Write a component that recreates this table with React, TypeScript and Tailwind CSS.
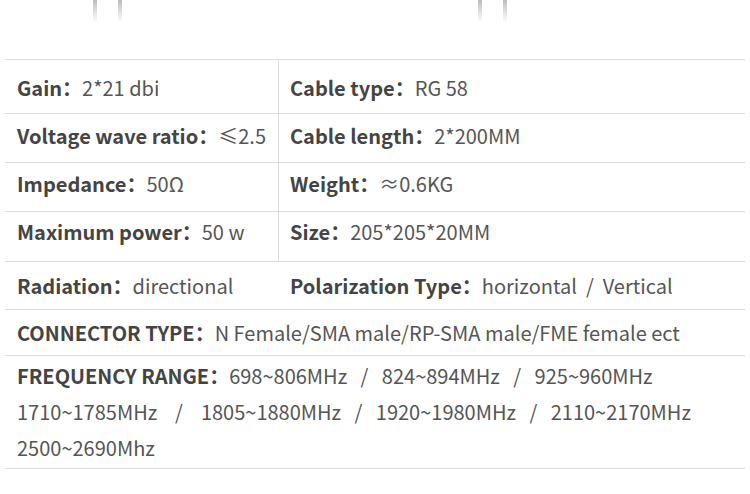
const font = { fontFamily: '"Noto Sans CJK SC", "Noto Sans", sans-serif' };

function Spec({ label, value }: { label: string; value: React.ReactNode }) {
  return (
    <span className="whitespace-nowrap">
      <b className="font-bold text-[#444]">{label}：</b>
      <span className="text-[#555]">{value}</span>
    </span>
  );
}

function Antenna() {
  return (
    <div className="flex gap-[21px]">
      <div className="w-[4px] h-[22px] bg-gradient-to-b from-[#bdbdbd] to-white" />
      <div className="w-[4px] h-[22px] bg-gradient-to-b from-[#bdbdbd] to-white" />
    </div>
  );
}

export default function App() {
  const pairs: [string, string, string, string, string][] = [
    ['Voltage wave ratio', '≤2.5', 'Cable length', '2*200MM', 'h-[48px] pt-[8px]'],
    ['Impedance', '50Ω', 'Weight', '≈0.6KG', 'h-[48px] pt-[7px]'],
    ['Maximum power', '50 w', 'Size', '205*205*20MM', 'h-[49px] pt-[6px]'],
  ];

  return (
    <div className="w-[750px] h-[494px] bg-white text-[20px] overflow-hidden" style={font}>
      <div className="h-[59px] flex">
        <div className="ml-[93px]">
          <Antenna />
        </div>
        <div className="ml-[356px]">
          <Antenna />
        </div>
      </div>

      <div className="mx-[5px] border-t border-[#dcdcdc]">
        <div className="grid grid-cols-[274px_1fr] border-b border-[#dcdcdc]">
          <div className="border-r border-[#dcdcdc] h-[53px] pl-[12px] pt-[14px] leading-[28px]">
            <Spec label="Gain" value="2*21 dbi" />
          </div>
          <div className="h-[53px] pl-[11px] pt-[14px] leading-[28px]">
            <Spec label="Cable type" value="RG 58" />
          </div>
        </div>

        {pairs.map(([l1, v1, l2, v2, row]) => (
          <div key={l1} className="grid grid-cols-[274px_1fr] border-b border-[#dcdcdc]">
            <div className={`border-r border-[#dcdcdc] pl-[12px] leading-[28px] ${row}`}>
              <Spec label={l1} value={v1} />
            </div>
            <div className={`pl-[11px] leading-[28px] ${row}`}>
              <Spec label={l2} value={v2} />
            </div>
          </div>
        ))}

        <div className="grid grid-cols-[274px_1fr] border-b border-[#dcdcdc] h-[48px] pt-[10px] leading-[28px]">
          <div className="pl-[12px]">
            <Spec label="Radiation" value="directional" />
          </div>
          <div className="pl-[11px]">
            <Spec label="Polarization Type" value={<>horizontal&nbsp; /&nbsp; Vertical</>} />
          </div>
        </div>

        <div className="border-b border-[#dcdcdc] h-[46px] pl-[12px] pt-[9px] leading-[28px]">
          <Spec label="CONNECTOR TYPE" value="N Female/SMA male/RP-SMA male/FME female ect" />
        </div>

        <div className="border-b border-[#dcdcdc] h-[113px] pl-[12px] pt-[2px] leading-[36px] text-[#555]">
          <div>
            <b className="font-bold text-[#444]">FREQUENCY RANGE：</b>
            698~806MHz&nbsp;&nbsp; /&nbsp;&nbsp; 824~894MHz&nbsp;&nbsp; /&nbsp;&nbsp; 925~960MHz
          </div>
          <div>
            1710~1785MHz&nbsp;&nbsp;&nbsp; /&nbsp;&nbsp;&nbsp; 1805~1880MHz&nbsp;&nbsp; /&nbsp;&nbsp; 1920~1980MHz&nbsp;&nbsp; /&nbsp;&nbsp; 2110~2170MHz
          </div>
          <div>2500~2690Mhz</div>
        </div>
      </div>
    </div>
  );
}
